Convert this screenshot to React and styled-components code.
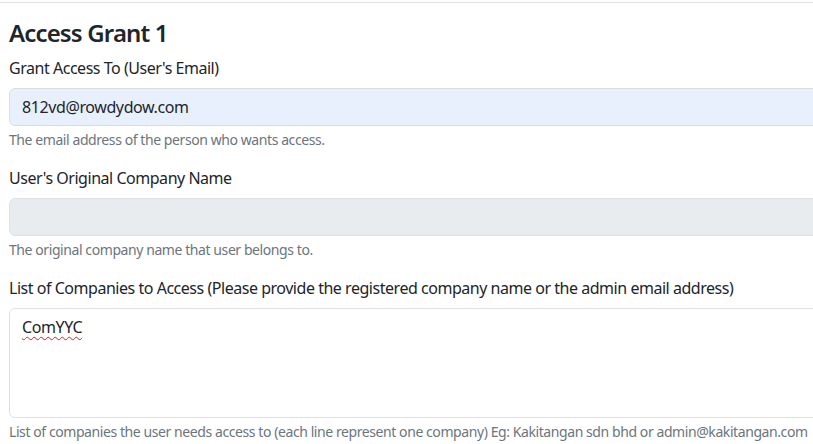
import React from "react";
import styled, { createGlobalStyle } from "styled-components";

const Global = createGlobalStyle`
  html, body { margin: 0; padding: 0; background: #fff; overflow: hidden; }
  body {
    font-family: "Noto Sans", "Open Sans", sans-serif;
    font-size: 16px;
    line-height: 1.5;
    color: #212529;
  }
  * { box-sizing: border-box; }
`;

const Section = styled.section`
  margin-top: 2px;
  border-top: 1px solid #e2e0e9;
  padding: 16px 0 0 9px;
  width: 860px;
`;

const Title = styled.h4`
  margin: 0 0 8px;
  font-size: 24px;
  font-weight: 600;
  line-height: 1.2;
  letter-spacing: -0.85px;
`;

const Field = styled.div`
  margin-bottom: 16px;
`;

const Label = styled.label`
  display: block;
  margin-bottom: 8px;
  font-size: 16px;
  line-height: 24px;
  letter-spacing: -0.47px;
`;

const Input = styled.input`
  display: block;
  width: 100%;
  height: 38px;
  padding: 6px 12px;
  font: inherit;
  letter-spacing: -0.4px;
  color: #212529;
  background: ${(p) => (p.$autofill ? "#e8f0fe" : p.disabled ? "#e9ecef" : "#fff")};
  border: 1px solid ${(p) => (p.$autofill ? "#dadfdc" : "#dee2e6")};
  border-radius: 6px;
  outline: none;
`;

const TextBox = styled.div`
  display: block;
  width: 100%;
  height: 110px;
  padding: 6px 12px;
  font: inherit;
  letter-spacing: -0.4px;
  color: #212529;
  background: #fff;
  border: 1px solid #dee2e6;
  border-radius: 6px;
  outline: none;
  white-space: pre-wrap;
`;

const Misspelled = styled.span`
  text-decoration: underline wavy #e0201c;
  text-decoration-thickness: 1px;
  text-underline-offset: 3px;
`;

const Help = styled.div`
  margin-top: 4px;
  font-size: 14px;
  line-height: 20px;
  letter-spacing: -0.42px;
  color: #6c757d;
  white-space: nowrap;
`;

export default function App() {
  return (
    <>
      <Global />
      <Section>
        <Title>Access Grant 1</Title>
        <Field>
          <Label>Grant Access To (User's Email)</Label>
          <Input $autofill defaultValue="812vd@rowdydow.com" spellCheck={false} />
          <Help>The email address of the person who wants access.</Help>
        </Field>
        <Field>
          <Label>User's Original Company Name</Label>
          <Input disabled defaultValue="" />
          <Help>The original company name that user belongs to.</Help>
        </Field>
        <Field>
          <Label>List of Companies to Access (Please provide the registered company name or the admin email address)</Label>
          <TextBox role="textbox" aria-multiline="true" contentEditable suppressContentEditableWarning spellCheck={false}>
            <Misspelled>ComYYC</Misspelled>
          </TextBox>
          <Help>
            List of companies the user needs access to (each line represent one company) Eg: Kakitangan sdn bhd or admin@kakitangan.com
          </Help>
        </Field>
      </Section>
    </>
  );
}
